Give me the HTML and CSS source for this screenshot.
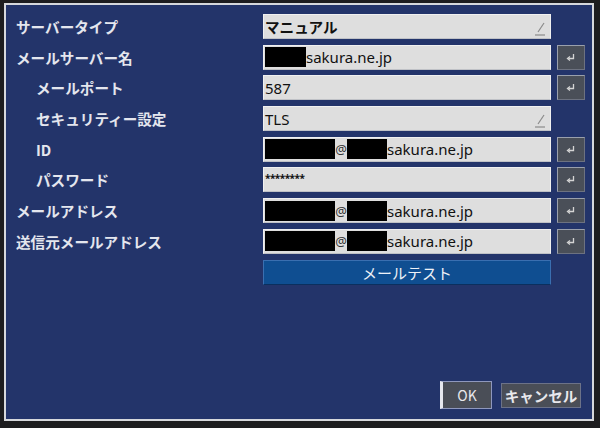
FILE: index.html
```html
<!DOCTYPE html>
<html lang="ja">
<head>
<meta charset="utf-8">
<link rel="stylesheet" href="styles.css">
</head>
<body>
<div class="panel">
  <div class="form">
    <div class="label">サーバータイプ</div>
    <div class="field select bold">マニュアル<svg class="caret" width="10" height="15" viewBox="0 0 10 15"><path d="M3 11 L9 2" stroke="#8a8a8a" stroke-width="1.2" fill="none"/><path d="M0 14 H10" stroke="#8a8a8a" stroke-width="1.2"/></svg></div>
    <div></div>

    <div class="label">メールサーバー名</div>
    <div class="field"><span class="mask m1"></span>sakura.ne.jp</div>
    <div class="enter"><svg width="10" height="9" viewBox="0 0 10 9"><path d="M7.5 1 V5.5 H2.5" stroke="#d4d4d4" stroke-width="1.3" fill="none"/><path d="M4 3.5 L1.5 5.5 L4 7.5" stroke="#d4d4d4" stroke-width="1.3" fill="none"/></svg></div>

    <div class="label sub">メールポート</div>
    <div class="field">587</div>
    <div class="enter"><svg width="10" height="9" viewBox="0 0 10 9"><path d="M7.5 1 V5.5 H2.5" stroke="#d4d4d4" stroke-width="1.3" fill="none"/><path d="M4 3.5 L1.5 5.5 L4 7.5" stroke="#d4d4d4" stroke-width="1.3" fill="none"/></svg></div>

    <div class="label sub">セキュリティー設定</div>
    <div class="field select">TLS<svg class="caret" width="10" height="15" viewBox="0 0 10 15"><path d="M3 11 L9 2" stroke="#8a8a8a" stroke-width="1.2" fill="none"/><path d="M0 14 H10" stroke="#8a8a8a" stroke-width="1.2"/></svg></div>
    <div></div>

    <div class="label sub">ID</div>
    <div class="field"><span class="mask m2"></span><span class="at">@</span><span class="mask m3"></span>sakura.ne.jp</div>
    <div class="enter"><svg width="10" height="9" viewBox="0 0 10 9"><path d="M7.5 1 V5.5 H2.5" stroke="#d4d4d4" stroke-width="1.3" fill="none"/><path d="M4 3.5 L1.5 5.5 L4 7.5" stroke="#d4d4d4" stroke-width="1.3" fill="none"/></svg></div>

    <div class="label sub">パスワード</div>
    <div class="field pw">********</div>
    <div class="enter"><svg width="10" height="9" viewBox="0 0 10 9"><path d="M7.5 1 V5.5 H2.5" stroke="#d4d4d4" stroke-width="1.3" fill="none"/><path d="M4 3.5 L1.5 5.5 L4 7.5" stroke="#d4d4d4" stroke-width="1.3" fill="none"/></svg></div>

    <div class="label">メールアドレス</div>
    <div class="field"><span class="mask m2"></span><span class="at">@</span><span class="mask m3"></span>sakura.ne.jp</div>
    <div class="enter"><svg width="10" height="9" viewBox="0 0 10 9"><path d="M7.5 1 V5.5 H2.5" stroke="#d4d4d4" stroke-width="1.3" fill="none"/><path d="M4 3.5 L1.5 5.5 L4 7.5" stroke="#d4d4d4" stroke-width="1.3" fill="none"/></svg></div>

    <div class="label">送信元メールアドレス</div>
    <div class="field"><span class="mask m2"></span><span class="at">@</span><span class="mask m3"></span>sakura.ne.jp</div>
    <div class="enter"><svg width="10" height="9" viewBox="0 0 10 9"><path d="M7.5 1 V5.5 H2.5" stroke="#d4d4d4" stroke-width="1.3" fill="none"/><path d="M4 3.5 L1.5 5.5 L4 7.5" stroke="#d4d4d4" stroke-width="1.3" fill="none"/></svg></div>

    <div></div>
    <div class="test">メールテスト</div>
    <div></div>
  </div>
  <div class="footer">
    <div class="btn ok">OK</div>
    <div class="btn cancel">キャンセル</div>
  </div>
</div>
</body>
</html>
```
FILE: styles.css
```css
html, body {
  margin: 0;
  padding: 0;
}
body {
  width: 600px;
  height: 428px;
  background: #1d1d1f;
  overflow: hidden;
  font-family: "Noto Sans", "Noto Sans CJK JP", sans-serif;
}
.panel {
  box-sizing: border-box;
  margin: 3px 6px 0 4px;
  width: 590px;
  height: 418px;
  border: 2px solid #d6d8dc;
  background: #23346a;
  padding: 9px 7px 10px 10px;
  display: flex;
  flex-direction: column;
}
.form {
  display: grid;
  grid-template-columns: 1fr 288px 28px;
  grid-auto-rows: 25px;
  column-gap: 6px;
  row-gap: 5.7px;
}
.label {
  font-family: "Noto Sans CJK JP", sans-serif;
  font-weight: 700;
  font-size: 14.6px;
  color: #e4e6ee;
  display: flex;
  align-items: center;
  white-space: nowrap;
}
.label.sub {
  padding-left: 20px;
}
.field {
  box-sizing: border-box;
  background: #dedede;
  border: 1px solid #f0f0f0;
  border-bottom-color: #bfc1c6;
  display: flex;
  align-items: center;
  padding-left: 1px;
  font-size: 15px;
  color: #111;
  position: relative;
  white-space: nowrap;
}
.field.bold {
  font-family: "Noto Sans CJK JP", sans-serif;
  font-weight: 700;
  font-size: 14.6px;
}
.caret {
  position: absolute;
  right: 5px;
  top: 6px;
}
.mask {
  display: inline-block;
  height: 20px;
  background: #000;
}
.m1 { width: 41px; }
.m2 { width: 70px; }
.m3 { width: 40px; }
.at {
  font-size: 13px;
  color: #333;
  width: 12px;
  text-align: center;
}
.pw {
  font-size: 10px;
  letter-spacing: -0.5px;
  font-weight: 700;
  align-items: flex-start;
  padding-top: 3px;
}
.enter {
  box-sizing: border-box;
  background: #4a4f58;
  border: 1px solid #6d7280;
  border-top-color: #9aa0ac;
  border-left-color: #9aa0ac;
  display: flex;
  align-items: center;
  justify-content: center;
}
.test {
  box-sizing: border-box;
  background: #0f4e91;
  border: 1px solid #3a6fb0;
  border-bottom-color: #0b2f5e;
  color: #eef2f8;
  font-family: "Noto Sans CJK JP", sans-serif;
  font-size: 15px;
  display: flex;
  align-items: center;
  justify-content: center;
}
.footer {
  margin-top: auto;
  display: flex;
  justify-content: flex-end;
  align-items: center;
  gap: 9px;
  margin-right: 4px;
}
.btn {
  box-sizing: border-box;
  background: #4a4e57;
  color: #e8e8ec;
  font-family: "Noto Sans CJK JP", sans-serif;
  display: flex;
  align-items: center;
  justify-content: center;
}
.ok {
  width: 52px;
  height: 28px;
  border: 1px solid #8e97bd;
  border-left: 3px solid #e6e8ee;
  font-size: 14px;
}
.cancel {
  width: 80px;
  height: 25px;
  border: 1px solid #6c7288;
  font-weight: 700;
  font-size: 14.5px;
}
```
